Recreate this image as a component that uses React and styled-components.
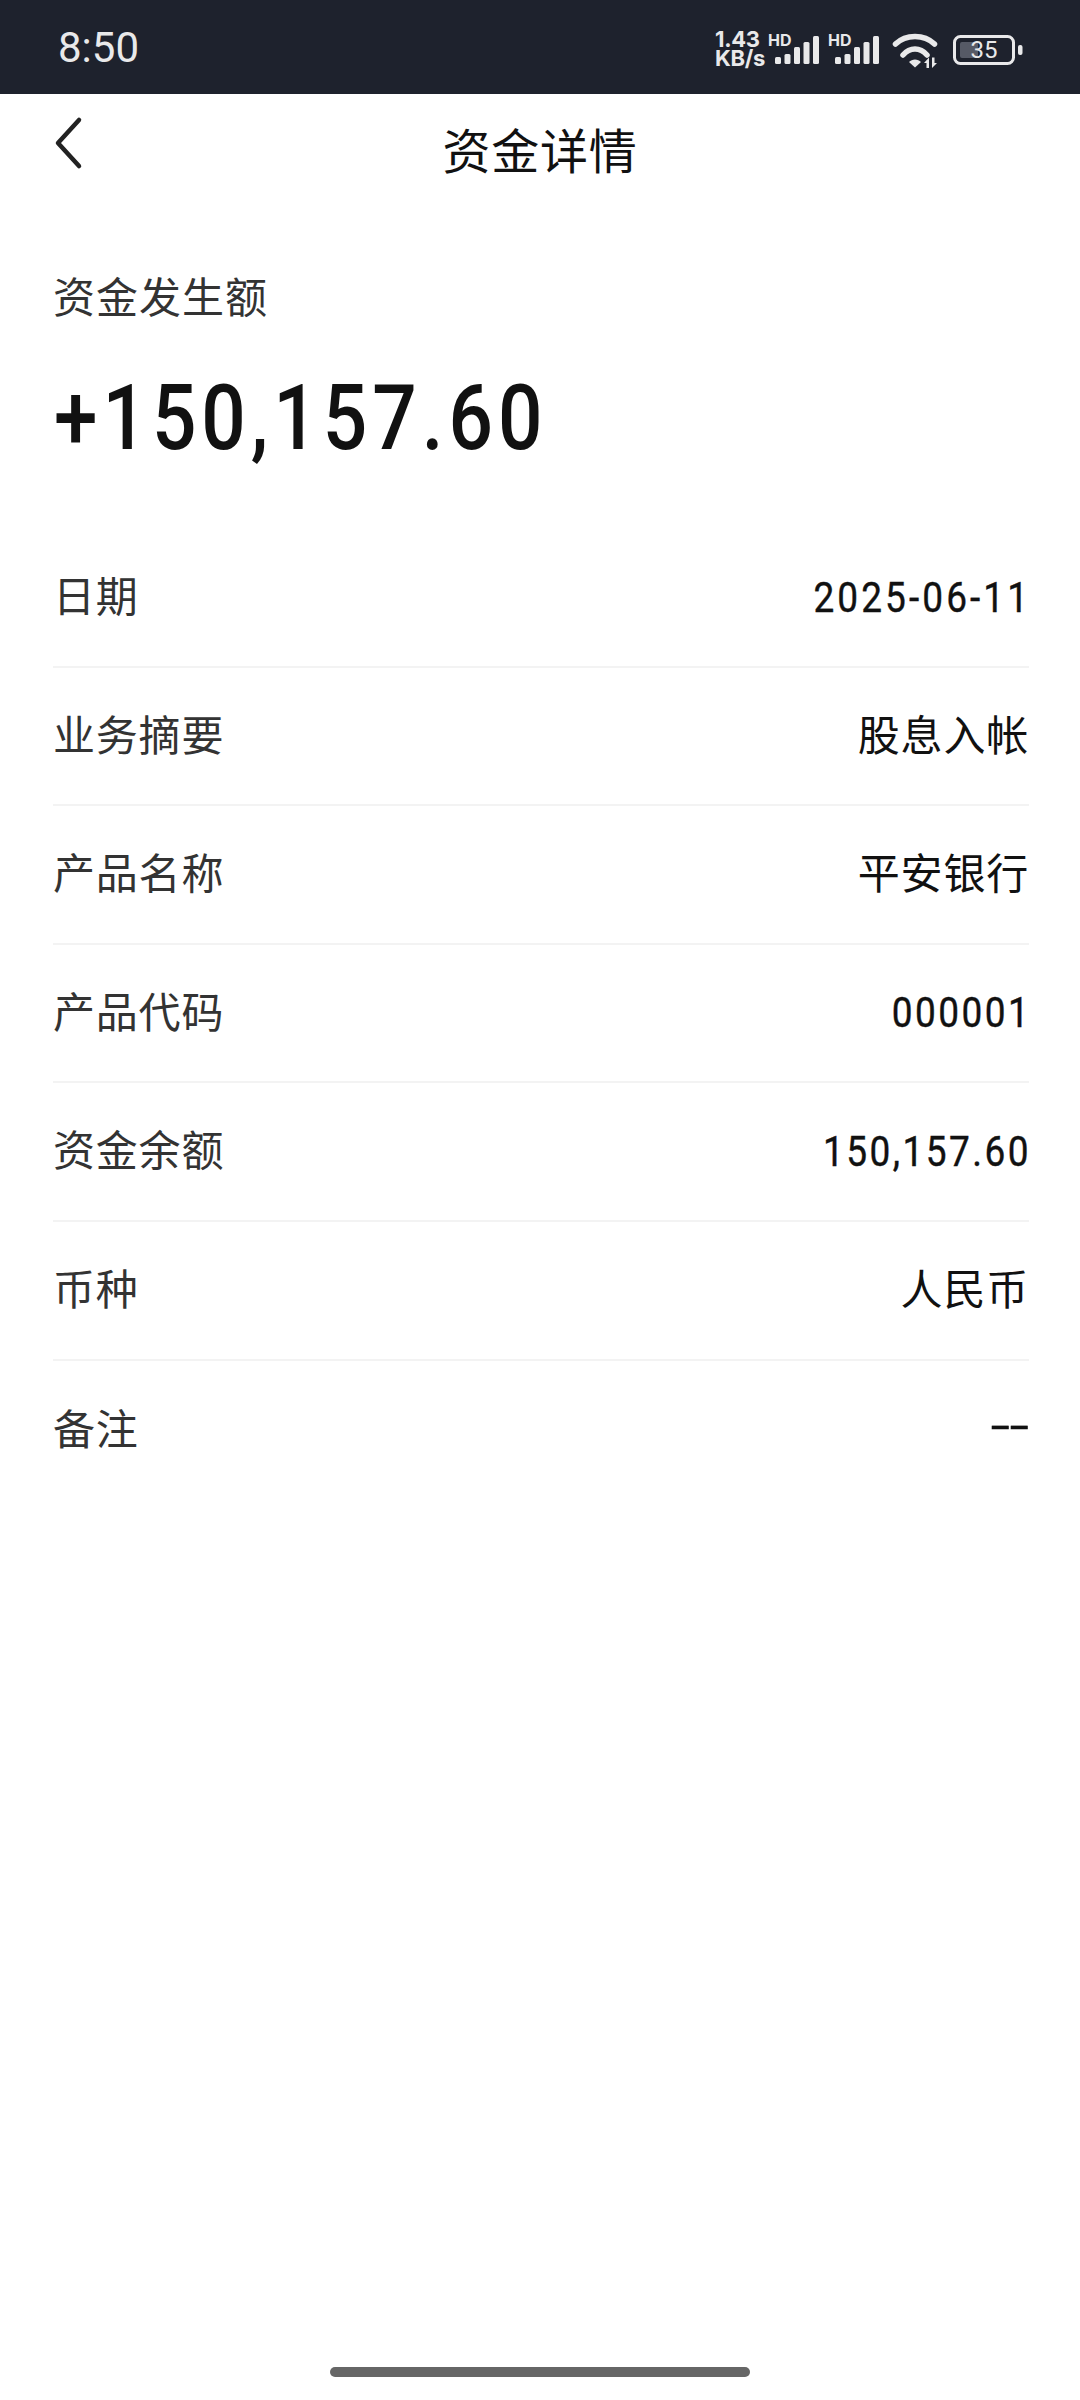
import React from "react";
import styled, { createGlobalStyle } from "styled-components";

const Global = createGlobalStyle`
  html, body { margin: 0; padding: 0; background: #fff; }
  * { box-sizing: border-box; }
`;
const CJK = `"Noto Sans CJK SC", "Noto Sans", sans-serif`;
const NUM = `Roboto, "Noto Sans CJK SC", sans-serif`;

const Page = styled.div`
  width: 1080px; height: 2400px; display: flex; flex-direction: column;
  background: #fff; font-family: ${CJK}; overflow: hidden;
`;
const StatusBar = styled.header`
  height: 94px; flex: none; background: #1e222d; display: flex; align-items: center;
  padding: 2px 0 0 58px; color: #e9e9ea;
`;
const Time = styled.span`
  font: 400 42px/1 Roboto, sans-serif; width: 657px;
`;
const Speed = styled.div`
  width: 53px; font: 700 22px/19px Inter, sans-serif; color: #e9e9ea; margin-top: 2px;
  white-space: nowrap; letter-spacing: -0.3px;
  display: flex; flex-direction: column;
`;
const SignalIcon = styled.svg`
  width: 52px; height: 34px; margin-right: 8px; margin-top: 4px; flex: none; overflow: visible;
`;
const WifiIcon = styled.svg`
  width: 48px; height: 36px; margin-left: 4px; margin-top: 6px; flex: none;
`;
const Battery = styled.div`
  position: relative; width: 70px; height: 30px; margin-left: 13px; margin-top: 4px; flex: none;
`;
const BatterySvg = styled.svg`
  width: 70px; height: 30px; display: block;
`;
const BatteryNum = styled.span`
  position: absolute; left: 0; width: 62px; top: 0; text-align: center;
  font: 400 24px/30px Roboto, sans-serif; color: #e9e9ea;
`;
const Nav = styled.nav`
  height: 112px; flex: none; display: grid; grid-template-columns: 1fr auto 1fr; align-items: center;
  padding: 0 54px;
`;
const BackIcon = styled.svg`
  width: 30px; height: 54px; margin-top: -14px; display: block;
`;
const Title = styled.h1`
  margin: 0 0 2px; font: 400 48px/1.2 ${CJK}; color: #111; letter-spacing: 0.8px;
`;
const Hero = styled.section`
  padding: 60px 53px 0; height: 323px; flex: none;
`;
const HeroLabel = styled.div`
  font: 400 42px/58px ${CJK}; color: #333; letter-spacing: 1px;
`;
const Amount = styled.div`
  margin-top: 44px; margin-left: 1px; font: 500 91px/100px ${NUM}; color: #111; letter-spacing: 5.8px; white-space: nowrap;
  transform: scaleX(0.86); transform-origin: left center;
`;
const List = styled.section`
  padding: 0 51px 0 53px; flex: none;
`;
const Row = styled.div`
  height: 138.6px; display: flex; justify-content: space-between; align-items: center;
  border-bottom: ${(p) => (p.$last ? "none" : "2px solid #f3f3f3")};
`;
const RowLabel = styled.span`
  font: 400 42px/1.2 ${CJK}; color: #333; letter-spacing: 0.8px; padding-bottom: 6px;
`;
const RowText = styled.span`
  font: 400 42px/1.2 ${CJK}; color: #111; letter-spacing: 0.8px; padding-bottom: 6px;
`;
const RowNumber = styled.span`
  font: 400 43px/1.2 ${NUM}; letter-spacing: ${(p) => p.$spacing}px; color: #111;
  margin-right: -2px; white-space: nowrap; display: inline-block;
  -webkit-text-stroke: 0.4px #111;
  transform: scaleX(0.86); transform-origin: right center;
`;
const RowDash = styled.span`
  font: 400 43px/1.2 ${NUM}; color: #111; white-space: nowrap; display: inline-block;
  padding-bottom: 9px; -webkit-text-stroke: 0.4px #111;
  transform: scaleX(1.6); transform-origin: right center;
`;
const Spacer = styled.div`flex: 1;`;
const HomeBar = styled.div`
  width: 420px; height: 10px; border-radius: 5px; background: #666; margin: 0 auto 23px; flex: none;
`;

const rows = [
  { label: "日期", value: "2025-06-11", kind: "number", spacing: 3.6 },
  { label: "业务摘要", value: "股息入帐", kind: "text" },
  { label: "产品名称", value: "平安银行", kind: "text" },
  { label: "产品代码", value: "000001", kind: "number", spacing: 2.9 },
  { label: "资金余额", value: "150,157.60", kind: "number", spacing: 2.9 },
  { label: "币种", value: "人民币", kind: "text" },
  { label: "备注", value: "--", kind: "dash" },
];

const Signal = () => (
  <SignalIcon viewBox="0 0 52 34">
    <text x="0" y="13" fontFamily="Inter, sans-serif" fontWeight="700" fontSize="16" fill="#e9e9ea">HD</text>
    <g fill="#e9e9ea">
      <rect x="7" y="24" width="6" height="7" rx="1.5" />
      <rect x="16.5" y="21" width="6" height="10" rx="1.5" />
      <rect x="26" y="14" width="6" height="17" rx="1.5" />
      <rect x="35.5" y="9" width="6" height="22" rx="1.5" />
      <rect x="45" y="3" width="6" height="28" rx="1.5" />
    </g>
  </SignalIcon>
);

const Value = ({ row }) => {
  if (row.kind === "dash") return <RowDash>{row.value}</RowDash>;
  if (row.kind === "number") return <RowNumber $spacing={row.spacing}>{row.value}</RowNumber>;
  return <RowText>{row.value}</RowText>;
};

export default function App() {
  return (
    <Page>
      <Global />
      <StatusBar>
        <Time>8:50</Time>
        <Speed><span>1.43</span><span>KB/s</span></Speed>
        <Signal />
        <Signal />
        <WifiIcon viewBox="0 0 48 36">
          <g fill="none" stroke="#e9e9ea" strokeWidth="5.5" strokeLinecap="round">
            <path d="M3.5 11 C14 1 32 1 42.5 11" />
            <path d="M11 22 C18 14 28 14 35 22" />
          </g>
          <path d="M17 29 C20 25.5 26 25.5 29 29 L23 34.5 Z" fill="#e9e9ea" />
          <path d="M37 24.5 V35 H34.5 V30 H32 Z M40 35 V24.5 H42.5 V30 H45 Z" fill="#e9e9ea" />
        </WifiIcon>
        <Battery>
          <BatterySvg viewBox="0 0 70 30">
            <rect x="1.5" y="1.5" width="59" height="27" rx="6" fill="none" stroke="#e9e9ea" strokeWidth="3" />
            <path d="M9 7 H25 V23 H9 Q7 23 7 21 V9 Q7 7 9 7 Z" fill="#565a66" />
            <rect x="65" y="10" width="4.5" height="10" rx="2" fill="#e9e9ea" />
          </BatterySvg>
          <BatteryNum>35</BatteryNum>
        </Battery>
      </StatusBar>
      <Nav>
        <BackIcon viewBox="0 0 30 54">
          <path d="M25 4 L4 27 L25 50" fill="none" stroke="#222" strokeWidth="4.5" strokeLinecap="round" strokeLinejoin="round" />
        </BackIcon>
        <Title>资金详情</Title>
        <span />
      </Nav>
      <Hero>
        <HeroLabel>资金发生额</HeroLabel>
        <Amount>+150,157.60</Amount>
      </Hero>
      <List>
        {rows.map((row, i) => (
          <Row key={row.label} $last={i === rows.length - 1}>
            <RowLabel>{row.label}</RowLabel>
            <Value row={row} />
          </Row>
        ))}
      </List>
      <Spacer />
      <HomeBar />
    </Page>
  );
}
